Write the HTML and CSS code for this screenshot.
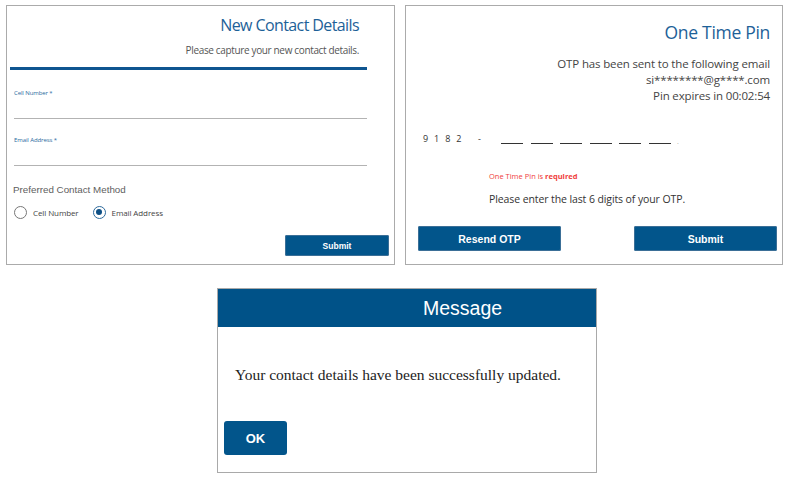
FILE: index.html
```html
<!DOCTYPE html>
<html>
<head>
<meta charset="utf-8">
<link rel="stylesheet" href="styles.css">
</head>
<body>
<div class="page">
  <div class="row">
    <section class="card contact">
      <div class="contact-inner">
        <h1 class="title">New Contact Details</h1>
        <p class="subtitle">Please capture your new contact details.</p>
        <div class="rule"></div>
        <div class="field first"><span class="label">Cell Number *</span><div class="line"></div></div>
        <div class="field"><span class="label">Email Address *</span><div class="line"></div></div>
      </div>
      <div class="pref">Preferred Contact Method</div>
      <div class="radios">
        <span class="radio"><span class="dot"></span>Cell Number</span>
        <span class="radio checked"><span class="dot"></span>Email Address</span>
      </div>
      <div class="actions"><button class="btn btn-small">Submit</button></div>
    </section>
    <section class="card otp">
      <h1 class="title otp-title">One Time Pin</h1>
      <div class="otp-info">
        <div>OTP has been sent to the following email</div>
        <div>si********@g****.com</div>
        <div>Pin expires in 00:02:54</div>
      </div>
      <div class="pin-row">
        <span class="prefix">9 1 8 2</span>
        <span class="dash">-</span>
        <span class="slots">
          <span class="slot"></span><span class="slot"></span><span class="slot"></span><span class="slot"></span><span class="slot"></span><span class="slot"></span>
        </span>
        <span class="end">.</span>
      </div>
      <div class="error">One Time Pin is <b>required</b></div>
      <div class="hint">Please enter the last 6 digits of your OTP.</div>
      <div class="otp-actions">
        <button class="btn btn-wide">Resend OTP</button>
        <button class="btn btn-wide">Submit</button>
      </div>
    </section>
  </div>
  <section class="dialog">
    <div class="dialog-head">Message</div>
    <p class="dialog-text">Your contact details have been successfully updated.</p>
    <button class="btn btn-ok">OK</button>
  </section>
</div>
</body>
</html>
```

FILE: styles.css
```css
* { box-sizing: border-box; }
html, body { margin: 0; padding: 0; background: #fff; }
body { width: 786px; height: 478px; overflow: hidden; font-family: "Open Sans", "Noto Sans", sans-serif; }

.page { display: flex; flex-direction: column; padding: 5px 0 0 6px; }
.row { display: flex; gap: 10px; }

.card { border: 1px solid #ababab; background: #fff; height: 260px; }

.contact { width: 389px; display: flex; flex-direction: column; }
.contact-inner { margin-left: 3px; width: 357px; padding-top: 8px; }

.title {
  margin: 0; font-weight: 400; color: #1d6198; text-align: right;
  font-size: 16px; line-height: 22px; padding-right: 8px; letter-spacing: -0.6px;
}
.subtitle {
  margin: 7px 0 0; text-align: right; padding-right: 8px;
  font-size: 10px; line-height: 14px; color: #555; letter-spacing: -0.35px;
}
.rule { margin-top: 10px; height: 3px; background: #0f5590; }

.field { margin-left: 4px; }
.field.first { margin-top: 19px; }
.field + .field { margin-top: 17px; }
.label { display: block; font-size: 6px; line-height: 8px; color: #2a6aa0; letter-spacing: -0.1px; }
.line { margin-top: 21px; height: 1px; background: #b3b3b3; }

.pref {
  margin: 17px 0 0 6px; font-family: "Liberation Sans", Arial, sans-serif;
  font-size: 9.8px; line-height: 14px; color: #606060;
}
.radios { margin: 8px 0 0 7px; display: flex; gap: 14px; height: 14px; align-items: center; }
.radio { display: flex; align-items: center; font-size: 8px; color: #444; letter-spacing: -0.1px; }
.radio .dot {
  width: 13px; height: 13px; border: 1px solid #777; border-radius: 50%;
  margin-right: 6px; display: inline-flex; align-items: center; justify-content: center;
}
.radio.checked .dot { border: 1px solid #2e6a9c; }
.radio.checked .dot::after { content: ""; width: 6px; height: 6px; border-radius: 50%; background: #0d4f85; }

.actions { margin-top: 16px; display: flex; justify-content: flex-end; padding-right: 5px; }

.btn {
  border: none; background: #02558b; color: #fff; border-radius: 2px;
  font-family: "Liberation Sans", Arial, sans-serif; font-weight: 700; padding: 0;
  box-shadow: 0 0 0 1px #3b6f97 inset;
}
.btn-small { width: 104px; height: 21px; font-size: 8.5px; }

.otp { width: 378px; padding: 0 5px 0 12px; display: flex; flex-direction: column; }
.otp-title { font-size: 17.5px; line-height: 24px; margin-top: 14px; padding-right: 7px; letter-spacing: -0.3px; }
.otp-info { margin-top: 12px; text-align: right; padding-right: 7px; font-size: 11.5px; line-height: 16px; color: #444; letter-spacing: -0.15px; }
.pin-row { margin-top: 27px; display: flex; align-items: flex-end; height: 16px; font-size: 9px; color: #333; }
.prefix { margin-left: 5px; letter-spacing: 1.8px; width: 55px; line-height: 16px; white-space: nowrap; }
.dash { width: 23px; line-height: 16px; }
.slots { display: flex; gap: 7.6px; margin-bottom: 3px; }
.slot { width: 22px; height: 1px; background: #333; }
.end { margin-left: 6px; color: #aaa; font-size: 7px; line-height: 10px; }
.error { margin: 24px 0 0 71px; font-size: 7.5px; line-height: 10px; color: #f0403c; }
.hint { margin: 11px 0 0 71px; font-size: 10.5px; line-height: 14px; color: #333; letter-spacing: -0.1px; }
.otp-actions { margin-top: 20px; display: flex; justify-content: space-between; }
.btn-wide { width: 143px; height: 25px; font-size: 10.5px; }

.dialog {
  margin: 23px 0 0 211px; width: 380px; height: 185px; border: 1px solid #a9a9a9;
  display: flex; flex-direction: column; align-items: flex-start;
}
.dialog-head {
  align-self: stretch; height: 38px; background: #005288; color: #fff;
  font-family: "Liberation Sans", Arial, sans-serif; font-size: 19.5px; line-height: 38px;
  padding-left: 205px;
}
.dialog-text {
  margin: 38px 0 0 17px; font-family: "Liberation Serif", "Times New Roman", serif;
  font-size: 15.5px; line-height: 20px; color: #222;
}
.btn-ok { margin: 36px 0 0 6px; width: 63px; height: 34px; border-radius: 3px; font-size: 13px; box-shadow: none; }
```
